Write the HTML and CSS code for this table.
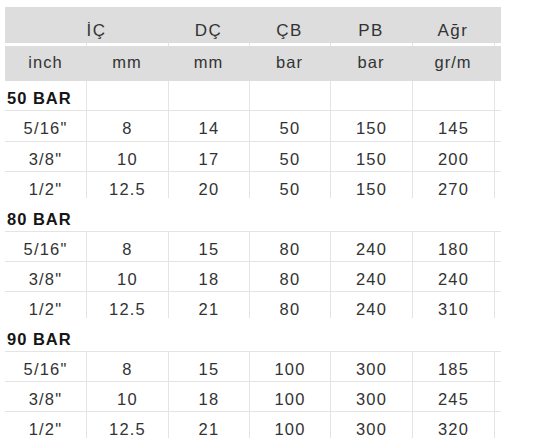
FILE: index.html
```html
<!DOCTYPE html>
<html lang="tr">
<head>
<meta charset="utf-8">
<title>Basınç tablosu</title>
<link rel="stylesheet" href="styles.css">
</head>
<body>
<div class="sheet">
  <div class="row head1">
    <div class="c span2 ic">İÇ</div>
    <div class="c">DÇ</div>
    <div class="c">ÇB</div>
    <div class="c">PB</div>
    <div class="c">Ağr</div>
    <div class="c"></div>
  </div>
  <div class="row gap lines">
    <div class="c"></div><div class="c"></div><div class="c"></div><div class="c"></div><div class="c"></div><div class="c"></div><div class="c"></div>
  </div>
  <div class="row head2">
    <div class="c">inch</div>
    <div class="c">mm</div>
    <div class="c">mm</div>
    <div class="c">bar</div>
    <div class="c">bar</div>
    <div class="c">gr/m</div>
    <div class="c"></div>
  </div>

  <div class="row group first lines">
    <div class="c label">50 BAR</div><div class="c"></div><div class="c"></div><div class="c"></div><div class="c"></div><div class="c"></div><div class="c"></div>
  </div>
  <div class="row data tall lines">
    <div class="c">5/16"</div><div class="c">8</div><div class="c">14</div><div class="c">50</div><div class="c">150</div><div class="c">145</div><div class="c"></div>
  </div>
  <div class="row data lines">
    <div class="c">3/8"</div><div class="c">10</div><div class="c">17</div><div class="c">50</div><div class="c">150</div><div class="c">200</div><div class="c"></div>
  </div>
  <div class="row data last lines">
    <div class="c">1/2"</div><div class="c">12.5</div><div class="c">20</div><div class="c">50</div><div class="c">150</div><div class="c">270</div><div class="c"></div>
  </div>

  <div class="row group">
    <div class="c label">80 BAR</div>
  </div>
  <div class="row data lines">
    <div class="c">5/16"</div><div class="c">8</div><div class="c">15</div><div class="c">80</div><div class="c">240</div><div class="c">180</div><div class="c"></div>
  </div>
  <div class="row data lines">
    <div class="c">3/8"</div><div class="c">10</div><div class="c">18</div><div class="c">80</div><div class="c">240</div><div class="c">240</div><div class="c"></div>
  </div>
  <div class="row data last lines">
    <div class="c">1/2"</div><div class="c">12.5</div><div class="c">21</div><div class="c">80</div><div class="c">240</div><div class="c">310</div><div class="c"></div>
  </div>

  <div class="row group">
    <div class="c label">90 BAR</div>
  </div>
  <div class="row data lines">
    <div class="c">5/16"</div><div class="c">8</div><div class="c">15</div><div class="c">100</div><div class="c">300</div><div class="c">185</div><div class="c"></div>
  </div>
  <div class="row data lines">
    <div class="c">3/8"</div><div class="c">10</div><div class="c">18</div><div class="c">100</div><div class="c">300</div><div class="c">245</div><div class="c"></div>
  </div>
  <div class="row data last lines">
    <div class="c">1/2"</div><div class="c">12.5</div><div class="c">21</div><div class="c">100</div><div class="c">300</div><div class="c">320</div><div class="c"></div>
  </div>
</div>
</body>
</html>
```

FILE: styles.css
```css
* { box-sizing: border-box; }

html, body {
  margin: 0;
  padding: 0;
  background: #ffffff;
}

body {
  padding: 7px 0 0 5px;
  font-family: "Liberation Sans", Arial, Helvetica, sans-serif;
  color: #333333;
}

.sheet {
  width: 496px;
  display: flex;
  flex-direction: column;
}

.row {
  display: grid;
  grid-template-columns: 81px 82px 81px 81px 82px 82px 7px;
}

.c {
  display: flex;
  justify-content: center;
  align-items: flex-start;
  white-space: nowrap;
}

.span2 { grid-column: span 2; }

.lines .c + .c { border-left: 1px solid #e4e4e4; }

/* header */
.head1, .head2 {
  background: #dddddd;
  color: #333333;
}
.head1 {
  height: 36px;
  font-size: 17px;
  line-height: 17px;
  letter-spacing: 1.5px;
}
.head1 .c { padding-top: 15px; }
.head1 .ic { padding-left: 20px; }

.gap { height: 3px; }

.head2 {
  height: 35px;
  font-size: 16.5px;
  line-height: 17px;
  letter-spacing: 1px;
}
.head2 .c { padding-top: 8px; }

/* group label rows */
.group {
  height: 34px;
  border-bottom: 1px solid #e4e4e4;
}
.group.first { height: 30px; }
.group .c { align-items: flex-end; }
.label {
  justify-content: flex-start;
  padding: 0 0 3px 2px;
  font-weight: bold;
  font-size: 16.5px;
  line-height: 17px;
  letter-spacing: 1px;
  color: #161616;
  grid-column: span 2;
}
.group.first .label { grid-column: auto; }

/* data rows */
.data {
  height: 30px;
  border-bottom: 1px solid #e4e4e4;
  font-size: 16.5px;
  line-height: 17px;
  letter-spacing: 1.2px;
}
.data.tall { height: 31px; }
.data.last { height: 26px; border-bottom: none; }
.data .c { padding-top: 9px; }
```
